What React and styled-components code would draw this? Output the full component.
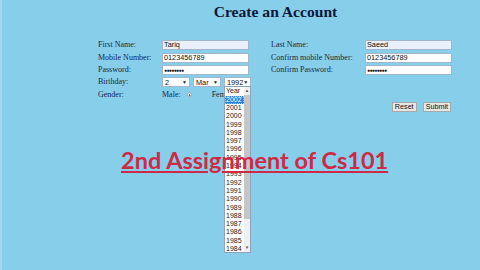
import React from "react";
import styled, { createGlobalStyle } from "styled-components";

const Global = createGlobalStyle`
  html, body { margin: 0; padding: 0; }
  body { width: 480px; height: 270px; overflow: hidden; background: #87ceeb; }
`;

const Page = styled.div`
  position: relative;
  width: 480px;
  height: 270px;
  box-sizing: border-box;
  background: #87ceeb;
  border-left: 2px solid #9fd8ef;
  overflow: hidden;
  font-family: "Liberation Serif", "Times New Roman", serif;
  color: #1a2744;
`;

const Title = styled.h1`
  margin: 0;
  padding: 2px 0 0 69px;
  text-align: center;
  font-size: 15.6px;
  line-height: 20px;
  font-weight: bold;
  color: #0c1838;
`;

const Form = styled.div`
  display: grid;
  grid-template-columns: 64px 109px 94px 87px;
  grid-auto-rows: 12.4px;
  align-items: center;
  margin: 17px 0 0 96px;
`;

const Label = styled.div`
  font-size: 8px;
  line-height: 10px;
  white-space: nowrap;
`;

const Input = styled.div`
  box-sizing: border-box;
  width: 87px;
  height: 10px;
  border: 1px solid #a3b7cc;
  background: ${(p) => (p.$filled ? "#e9f0fb" : "#ffffff")};
  font-family: "Liberation Sans", Arial, sans-serif;
  font-size: ${(p) => (p.$secret ? "5px" : "7.3px")};
  letter-spacing: ${(p) => (p.$secret ? "-0.6px" : "0")};
  line-height: 8px;
  padding-left: 1px;
  color: #111;
  white-space: nowrap;
  overflow: hidden;
`;

const SelectRow = styled.div`
  display: flex;
  gap: 3px;
  align-items: center;
`;

const SelectWrap = styled.div`
  position: relative;
`;

const Select = styled.div`
  box-sizing: border-box;
  width: ${(p) => p.$w}px;
  height: 10px;
  border: 1px solid #a3b7cc;
  background: #fff;
  display: flex;
  align-items: center;
  justify-content: space-between;
  padding: 0 2px;
  font-family: "Liberation Sans", Arial, sans-serif;
  font-size: 7.3px;
  color: #111;
`;

const Caret = styled.span`
  font-size: 5px;
  color: #222;
`;

const Dropdown = styled.div`
  position: absolute;
  left: 0;
  top: 9px;
  z-index: 2;
  box-sizing: border-box;
  width: 27px;
  height: 167px;
  background: #fff;
  border: 1px solid #8ea3b8;
  display: flex;
`;

const Options = styled.div`
  flex: 1;
  display: flex;
  flex-direction: column;
`;

const Option = styled.div`
  height: 8.3px;
  line-height: 8.3px;
  font-family: "Liberation Sans", Arial, sans-serif;
  font-size: 7px;
  padding-left: 1px;
  color: ${(p) => (p.$sel ? "#fff" : "#222")};
  background: ${(p) => (p.$sel ? "#2a7ee0" : "transparent")};
  outline: ${(p) => (p.$sel ? "1px dotted #9cc8ff" : "none")};
  outline-offset: -1px;
`;

const Scroll = styled.div`
  width: 6px;
  background: #f0f0f0;
  display: flex;
  flex-direction: column;
  align-items: center;
`;

const Arrow = styled.div`
  height: 8px;
  font-size: 4.5px;
  line-height: 8px;
  color: #555;
`;

const Thumb = styled.div`
  width: 6px;
  height: 124px;
  background: #c6c6c6;
`;

const Spacer = styled.div`
  flex: 1;
`;

const GenderRow = styled.div`
  display: flex;
  align-items: center;
  font-size: 8px;
  white-space: nowrap;
`;

const Radio = styled.span`
  box-sizing: border-box;
  width: 5px;
  height: 5px;
  border-radius: 50%;
  background: #fff;
  border: 1px solid #9ab;
  margin: 0 20px 0 6px;
  position: relative;
  &::after {
    content: "";
    position: absolute;
    left: 1px;
    top: 1px;
    width: 1.5px;
    height: 1.5px;
    border-radius: 50%;
    background: #444;
  }
`;

const Buttons = styled.div`
  grid-column: 4;
  display: flex;
  justify-content: flex-end;
  gap: 6px;
  padding-right: 1px;
`;

const Button = styled.div`
  box-sizing: border-box;
  height: 10px;
  padding: 0 2px;
  border: 1px solid #a8a8a8;
  background: #e6e6e6;
  font-family: "Liberation Sans", Arial, sans-serif;
  font-size: 7.2px;
  line-height: 8px;
  color: #111;
`;

const Banner = styled.div`
  position: absolute;
  left: 119px;
  top: 146px;
  z-index: 3;
  font-family: Lato, "Open Sans", sans-serif;
  font-weight: bold;
  font-size: 23.5px;
  color: #d3223d;
  text-decoration: underline;
  text-decoration-thickness: 2px;
  text-underline-offset: 2px;
  opacity: 0.95;
  white-space: nowrap;
`;

const years = [];
for (let y = 2002; y >= 1984; y--) years.push(y);

export default function App() {
  return (
    <Page>
      <Global />
      <Title>Create an Account</Title>
      <Form>
        <Label>First Name:</Label>
        <Input $filled>Tariq</Input>
        <Label>Last Name:</Label>
        <Input $filled>Saeed</Input>

        <Label>Mobile Number:</Label>
        <Input>0123456789</Input>
        <Label>Confirm mobile Number:</Label>
        <Input>0123456789</Input>

        <Label>Password:</Label>
        <Input $secret>●●●●●●●●</Input>
        <Label>Confirm Password:</Label>
        <Input $secret>●●●●●●●●</Input>

        <Label>Birthday:</Label>
        <SelectRow>
          <Select $w={28}>2<Caret>▼</Caret></Select>
          <Select $w={28}>Mar<Caret>▼</Caret></Select>
          <SelectWrap>
            <Select $w={27}>1992<Caret>▼</Caret></Select>
            <Dropdown>
              <Options>
                <Option>Year</Option>
                {years.map((y) => (
                  <Option key={y} $sel={y === 2002}>{y}</Option>
                ))}
              </Options>
              <Scroll>
                <Arrow>▲</Arrow>
                <Thumb />
                <Spacer />
                <Arrow>▼</Arrow>
              </Scroll>
            </Dropdown>
          </SelectWrap>
        </SelectRow>
        <div />
        <div />

        <Label>Gender:</Label>
        <GenderRow>
          Male: <Radio /> Female:
        </GenderRow>
        <div />
        <div />

        <div />
        <div />
        <div />
        <Buttons>
          <Button>Reset</Button>
          <Button>Submit</Button>
        </Buttons>
      </Form>
      <Banner>2nd Assignment of Cs101</Banner>
    </Page>
  );
}
